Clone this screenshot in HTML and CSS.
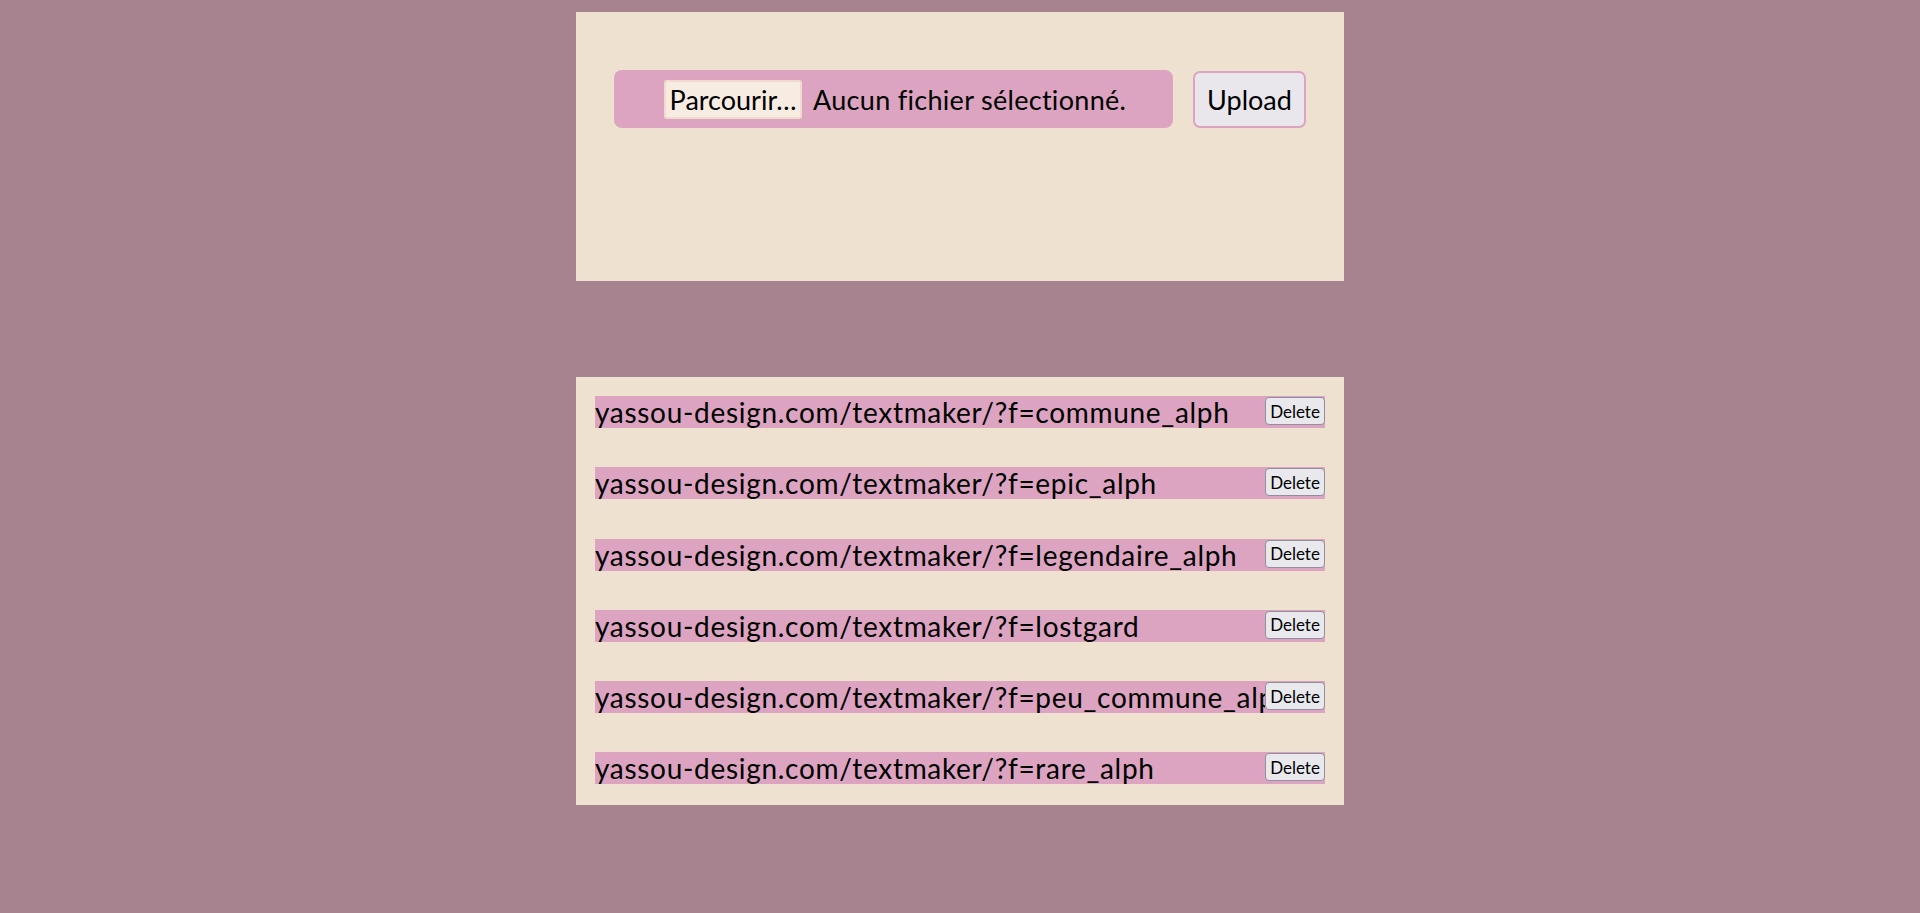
FILE: index.html
```html
<!DOCTYPE html>
<html lang="fr">
<head>
<meta charset="utf-8">
<title>Upload</title>
<link rel="stylesheet" href="styles.css">
</head>
<body>
<main class="page">
  <section class="panel panel-upload">
    <div class="upload-row">
      <form class="file-form">
        <span class="file-btn">Parcourir…</span>
        <span class="file-label">Aucun fichier sélectionné.</span>
      </form>
      <button class="upload-btn" type="button">Upload</button>
    </div>
  </section>
  <section class="panel panel-list">
    <div class="entry"><span class="entry-link">yassou-design.com/textmaker/?f=commune_alph</span><button class="delete-btn" type="button">Delete</button></div>
    <div class="entry"><span class="entry-link">yassou-design.com/textmaker/?f=epic_alph</span><button class="delete-btn" type="button">Delete</button></div>
    <div class="entry"><span class="entry-link">yassou-design.com/textmaker/?f=legendaire_alph</span><button class="delete-btn" type="button">Delete</button></div>
    <div class="entry"><span class="entry-link">yassou-design.com/textmaker/?f=lostgard</span><button class="delete-btn" type="button">Delete</button></div>
    <div class="entry"><span class="entry-link">yassou-design.com/textmaker/?f=peu_commune_alph</span><button class="delete-btn" type="button">Delete</button></div>
    <div class="entry"><span class="entry-link">yassou-design.com/textmaker/?f=rare_alph</span><button class="delete-btn" type="button">Delete</button></div>
  </section>
</main>
</body>
</html>
```
FILE: styles.css
```css
* { box-sizing: border-box; }
html, body { margin: 0; padding: 0; }
body {
  background: #a7828f;
  font-family: Lato, "Open Sans", sans-serif;
  color: #000;
  min-height: 913px;
}
.page {
  width: 768px;
  margin: 12px auto 0;
  display: flex;
  flex-direction: column;
  gap: 96px;
}
.panel {
  background: #eee1d0;
}
.panel-upload {
  height: 269px;
  padding: 58px 38px 0;
}
.upload-row {
  display: flex;
  align-items: flex-start;
  gap: 20px;
}
.file-form {
  flex: 1;
  margin: 0;
  height: 58px;
  background: #dca4c1;
  border-radius: 8px;
  display: flex;
  align-items: center;
  padding-left: 50px;
  gap: 11px;
  font-size: 27px;
}
.file-btn {
  background: #f7ece2;
  border: 2px solid #efdccf;
  border-radius: 3px;
  height: 39px;
  width: 138px;
  display: flex;
  align-items: center;
  justify-content: center;
  white-space: nowrap;
}
.file-label {
  white-space: nowrap;
  letter-spacing: 0.3px;
}
.upload-btn {
  width: 113px;
  height: 57px;
  margin-top: 1px;
  background: #e9e6ec;
  border: 2px solid #dca4c1;
  border-radius: 7px;
  font-family: inherit;
  font-size: 27px;
  color: #000;
  padding: 0;
}
.panel-list {
  padding: 19px 19px 21px;
  display: flex;
  flex-direction: column;
  gap: 39.3px;
}
.entry {
  display: flex;
  align-items: flex-start;
  height: 32px;
  background: #dca4c1;
  font-size: 28px;
  line-height: 32px;
}
.entry-link {
  flex: 1;
  min-width: 0;
  overflow: hidden;
  white-space: nowrap;
  letter-spacing: 0.7px;
}
.delete-btn {
  flex: none;
  width: 60px;
  height: 28px;
  margin-top: 1px;
  padding: 0;
  background: #e9e9ed;
  border: 1px solid #8f8f9d;
  border-radius: 4px;
  font-family: inherit;
  font-size: 17px;
  color: #000;
}
```
